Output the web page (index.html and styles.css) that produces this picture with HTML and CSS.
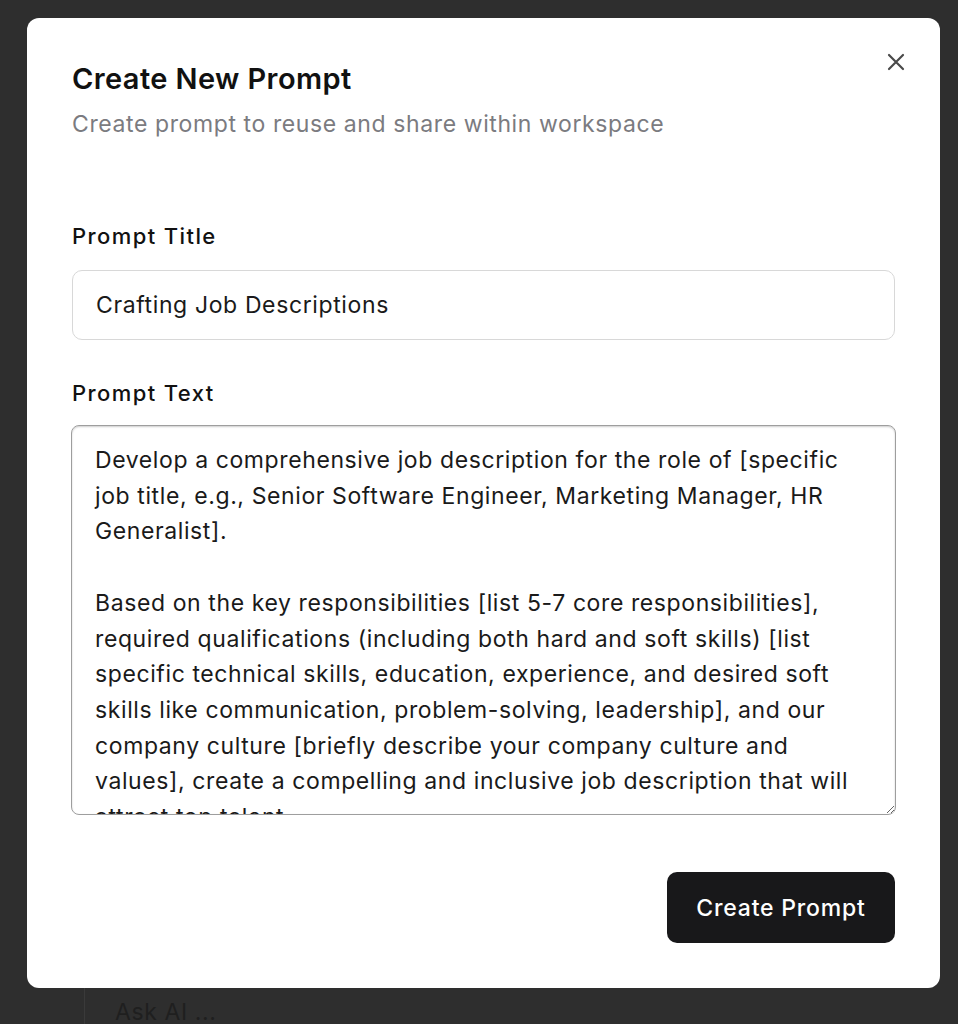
FILE: index.html
```html
<!DOCTYPE html>
<html>
<head>
<meta charset="utf-8">
<link rel="stylesheet" href="styles.css">
</head>
<body>
<div class="page">
  <div class="ask-box"><span class="ask-text">Ask AI ...</span></div>
</div>
<div class="overlay">
  <div class="modal">
    <button class="close" aria-label="Close">
      <svg width="20" height="20" viewBox="0 0 20 20" fill="none" stroke="#4a4a4a" stroke-width="2.2" stroke-linecap="round"><path d="M3 3L17 17M17 3L3 17"/></svg>
    </button>
    <div class="header">
      <h1 class="title">Create New Prompt</h1>
      <p class="subtitle">Create prompt to reuse and share within workspace</p>
    </div>
    <div class="field">
      <label class="label">Prompt Title</label>
      <div class="input">Crafting Job Descriptions</div>
    </div>
    <div class="field field-text">
      <label class="label">Prompt Text</label>
      <textarea class="textarea">Develop a comprehensive job description for the role of [specific
job title, e.g., Senior Software Engineer, Marketing Manager, HR
Generalist].

Based on the key responsibilities [list 5-7 core responsibilities],
required qualifications (including both hard and soft skills) [list
specific technical skills, education, experience, and desired soft
skills like communication, problem-solving, leadership], and our
company culture [briefly describe your company culture and
values], create a compelling and inclusive job description that will
attract top talent.</textarea>
    </div>
    <div class="footer">
      <button class="primary">Create Prompt</button>
    </div>
  </div>
</div>
</body>
</html>
```
FILE: styles.css
```css
* { box-sizing: border-box; }
html, body { margin: 0; padding: 0; }
body {
  width: 958px;
  height: 1024px;
  background: #2e2e2e;
  font-family: Inter, "Noto Sans", sans-serif;
  overflow: hidden;
  position: relative;
}
.page {
  height: 1024px;
  display: flex;
  flex-direction: column;
  justify-content: flex-end;
  padding-left: 84px;
}
.ask-box {
  height: 36px;
  width: 800px;
  border-left: 1px solid #3a3a3a;
  padding-left: 30px;
  padding-top: 10px;
}
.ask-text {
  color: #1f1f1f;
  font-size: 23px;
  letter-spacing: 0.6px;
}
.overlay {
  position: absolute;
  left: 27px;
  top: 18px;
  width: 913px;
}
.modal {
  position: relative;
  background: #fff;
  border-radius: 12px;
  height: 970px;
  padding: 42px 45px 0 45px;
  display: flex;
  flex-direction: column;
}
.close {
  position: absolute;
  right: 34px;
  top: 34px;
  background: none;
  border: none;
  padding: 0;
  width: 20px;
  height: 20px;
  cursor: pointer;
}
.header { margin-bottom: 82px; }
.title {
  margin: 0;
  font-size: 29px;
  font-weight: 600;
  color: #111;
  letter-spacing: 0.4px;
  line-height: 38px;
}
.subtitle {
  margin: 11px 0 0;
  font-size: 23px;
  color: #7b7b80;
  line-height: 30px;
  letter-spacing: 0.6px;
}
.field { display: flex; flex-direction: column; }
.label {
  font-size: 22px;
  font-weight: 500;
  color: #111;
  line-height: 30px;
  letter-spacing: 1.4px;
  margin-bottom: 19px;
}
.input {
  height: 70px;
  border: 1px solid #d8d8d8;
  border-radius: 10px;
  padding: 0 23px;
  display: flex;
  align-items: center;
  font-size: 23px;
  letter-spacing: 0.62px;
  color: #1a1a1a;
}
.field-text { margin-top: 38px; }
.field-text .label { margin-bottom: 17px; }
.textarea {
  margin-left: -1px;
  width: 825px;
  height: 390px;
  border: 1px solid #9e9e9e;
  border-radius: 8px;
  box-shadow: inset 0 1px 2px rgba(0,0,0,0.2);
  padding: 17px 23px;
  font-family: Inter, "Noto Sans", sans-serif;
  font-size: 23px;
  letter-spacing: 0.6px;
  line-height: 35.7px;
  color: #1a1a1a;
  white-space: pre;
  overflow: hidden;
  resize: vertical;
  outline: none;
}
.footer {
  display: flex;
  justify-content: flex-end;
  margin-top: 57px;
}
.primary {
  background: #18181a;
  color: #fff;
  border: none;
  border-radius: 10px;
  height: 71px;
  width: 228px;
  font-family: Inter, "Noto Sans", sans-serif;
  font-size: 23px;
  font-weight: 500;
  letter-spacing: 0.8px;
}
```
